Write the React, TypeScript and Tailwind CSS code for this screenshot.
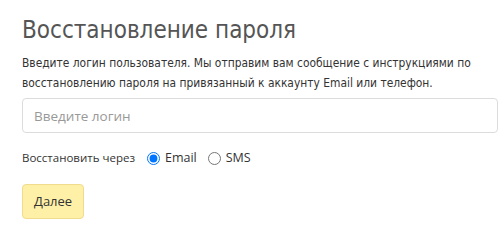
export default function App() {
  return (
    <div className="w-[500px] h-[232px] bg-white px-[22px] pt-[12px] overflow-hidden">
      <h1 className="font-['DejaVu_Sans_Condensed',sans-serif] text-[24px] leading-[36px] text-[#555555]">
        Восстановление пароля
      </h1>
      <p className="mt-[5px] font-['DejaVu_Sans_Condensed',sans-serif] text-[11.9px] leading-[20px] text-[#333333]">
        Введите логин пользователя. Мы отправим вам сообщение с инструкциями по восстановлению пароля на привязанный к аккаунту Email или телефон.
      </p>
      <input
        type="text"
        placeholder="Введите логин"
        className="mt-[5px] block w-[476px] h-[35px] rounded-[4px] border border-[#dcdcdc] px-[11px] font-['Open_Sans',sans-serif] text-[13.5px] text-[#333] placeholder:text-[#999999] outline-none"
      />
      <div className="mt-[15px] flex items-center font-['Open_Sans',sans-serif] text-[11.5px] leading-[20px] text-[#333333]">
        <span>Восстановить через</span>
        <label className="ml-[12px] flex items-center gap-[5px]">
          <input type="radio" name="via" defaultChecked className="m-0 w-[13px] h-[13px] accent-[#0075ff]" />
          <span className="text-[12.5px]">Email</span>
        </label>
        <label className="ml-[11px] flex items-center gap-[5px]">
          <input type="radio" name="via" className="m-0 w-[13px] h-[13px]" />
          <span className="text-[12.5px]">SMS</span>
        </label>
      </div>
      <button className="mt-[16px] h-[35px] px-[11px] rounded-[4px] border border-[#f0dc8c] bg-[#fff0a8] font-['Open_Sans',sans-serif] text-[13px] text-[#333333]">
        Далее
      </button>
    </div>
  );
}
